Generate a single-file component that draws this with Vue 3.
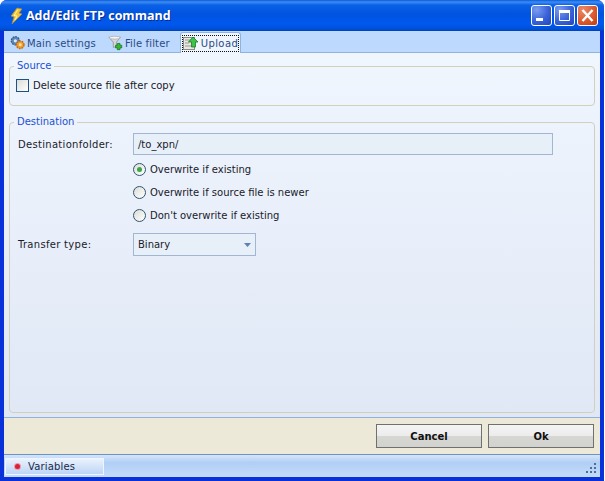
<script setup>
const options = [
  { label: 'Overwrite if existing', checked: true },
  { label: 'Overwrite if source file is newer', checked: false },
  { label: "Don't overwrite if existing", checked: false },
]
</script>

<template>
  <div class="window">
    <div class="titlebar">
      <svg class="app-icon" width="16" height="18" viewBox="0 0 16 18">
        <path d="M9 1 L14 2 L11 6 L14 7 L4 17 L6 10 L3 9 Z" fill="#f2c431" stroke="#9b8c58" stroke-width="0.8"/>
        <path d="M10 2.5 L6 8.5 L9 9 L7 13" fill="none" stroke="#fff6b0" stroke-width="1"/>
      </svg>
      <span class="title">Add/Edit FTP command</span>
      <div class="caption-buttons">
        <div class="cap cap-blue">
          <svg width="19" height="19" viewBox="0 0 19 19"><rect x="4" y="12" width="7" height="3" fill="#fff"/></svg>
        </div>
        <div class="cap cap-blue">
          <svg width="19" height="19" viewBox="0 0 19 19"><path d="M4.5 4.5H14.5V14.5H4.5Z" fill="none" stroke="#fff"/><rect x="4" y="4" width="11" height="3" fill="#fff"/></svg>
        </div>
        <div class="cap cap-red">
          <svg width="19" height="19" viewBox="0 0 19 19"><path d="M4.5 4 L14.5 15 M14.5 4 L4.5 15" stroke="#fff" stroke-width="2.4"/></svg>
        </div>
      </div>
    </div>
    <div class="body">
      <div class="tabs">
        <div class="tab">
          <svg width="16" height="16" viewBox="0 0 18 17">
            <circle cx="6" cy="6" r="4.6" fill="#5a86b8" stroke="#2f5c8e" stroke-width="1.4" stroke-dasharray="2 1"/>
            <circle cx="6" cy="6" r="1.8" fill="#dfe9f5"/>
            <circle cx="11.5" cy="10.5" r="4.2" fill="#f0a030" stroke="#c86c10" stroke-width="1.6" stroke-dasharray="2 1"/>
            <circle cx="11.5" cy="10.5" r="1.6" fill="#ffe2a8"/>
          </svg>
          <span>Main settings</span>
        </div>
        <div class="tab">
          <svg width="16" height="16" viewBox="0 0 18 18">
            <path d="M1 2.5 H14 L9.5 8 V13 L6 14 V8 Z" fill="#d8d8d8" stroke="#8a8a8a" stroke-width="0.8"/>
            <ellipse cx="7.5" cy="3" rx="6" ry="1.6" fill="#f4f4f4" stroke="#9a9a9a" stroke-width="0.6"/>
            <path d="M10.5 9.5H13.5V11.5H15.5V14.5H13.5V16.5H10.5V14.5H8.5V11.5H10.5Z" fill="#35b838" stroke="#1b6d1d" stroke-width="0.8"/>
          </svg>
          <span>File filter</span>
        </div>
        <div class="tab active">
          <div class="focus">
            <svg width="16" height="15" viewBox="0 0 16 15">
              <rect x="0.5" y="1.5" width="11" height="12" fill="#e8e6df" stroke="#8c8c86"/>
              <path d="M2 4H8M2 7H6M2 10H9" stroke="#9a9a94"/>
              <path d="M10 1 L15 6 H12.5 V11 H8.5 V6 H5.5 Z" fill="#3cc44a" stroke="#1a7a26" stroke-width="0.8"/>
            </svg>
            <span>Upload</span>
          </div>
        </div>
      </div>
      <div class="panel">
        <fieldset class="group source">
          <legend>Source</legend>
          <label class="check"><span class="box"></span><span>Delete source file after copy</span></label>
        </fieldset>
        <fieldset class="group dest">
          <legend>Destination</legend>
          <div class="row first">
            <span class="field-label">Destinationfolder:</span>
            <div class="input">/to_xpn/</div>
          </div>
          <div class="radios">
            <div v-for="o in options" :key="o.label" class="radio">
              <span class="circle"><span v-if="o.checked" class="dot"></span></span>
              <span>{{ o.label }}</span>
            </div>
          </div>
          <div class="row type-row">
            <span class="field-label">Transfer type:</span>
            <div class="select">
              <span>Binary</span>
              <svg width="7" height="4" viewBox="0 0 7 4"><path d="M0 0H7L3.5 4Z" fill="#5b82b4"/></svg>
            </div>
          </div>
        </fieldset>
      </div>
      <div class="footer">
        <button class="btn">Cancel</button>
        <button class="btn">Ok</button>
      </div>
      <div class="status">
        <div class="variables">
          <span class="bullet"></span>
          <span>Variables</span>
        </div>
        <svg class="grip" width="11" height="11" viewBox="0 0 11 11" fill="#4d6f96">
          <rect x="8" y="0" width="2" height="2"/>
          <rect x="4" y="4" width="2" height="2"/><rect x="8" y="4" width="2" height="2"/>
          <rect x="0" y="8" width="2" height="2"/><rect x="4" y="8" width="2" height="2"/><rect x="8" y="8" width="2" height="2"/>
        </svg>
      </div>
    </div>
  </div>
</template>

<style>
html, body { margin: 0; background: #fff; }
</style>

<style scoped>
.window {
  width: 604px;
  height: 481px;
  box-sizing: border-box;
  display: flex;
  flex-direction: column;
  font-family: "DejaVu Sans", sans-serif;
  font-size: 10px;
  color: #1a1a2a;
  background: #0831d9;
  border-radius: 7px 7px 0 0;
  overflow: hidden;
}
.titlebar {
  height: 31px;
  flex: none;
  display: flex;
  align-items: center;
  padding: 0 6px 0 8px;
  background: linear-gradient(180deg, #0a5bdc 0, #3f8cf3 2px, #0a62e8 5px, #0053df 14px, #0058ee 24px, #0050d8 29px, #0040b8 31px);
}
.app-icon { margin-right: 2px; }
.title {
  font-family: "Open Sans", sans-serif;
  font-weight: 700;
  font-size: 12.5px;
  color: #fff;
  text-shadow: 1px 1px 0 #0a2d90;
  flex: 1;
}
.caption-buttons { display: flex; gap: 2px; }
.cap {
  width: 19px;
  height: 19px;
  border: 1px solid #fff;
  border-radius: 3px;
  display: flex;
}
.cap svg { display: block; }
.cap-blue { background: radial-gradient(circle at 25% 20%, #7a9cf0, #3a62d8 55%, #1f45c0); }
.cap-red { background: radial-gradient(circle at 25% 20%, #eb8a68, #dc5a30 55%, #c03c12); }
.body {
  flex: 1;
  min-height: 0;
  margin: 0 4px 4px;
  display: flex;
  flex-direction: column;
  background: #bdd9fd;
}
.tabs {
  height: 22px;
  box-sizing: border-box;
  flex: none;
  display: flex;
  align-items: flex-end;
  padding-left: 1px;
  background: #bdd9fd;
  border-bottom: 1px solid #8fb2df;
  color: #2a4a86;
  letter-spacing: 0.15px;
}
.tab {
  display: flex;
  align-items: center;
  gap: 1px;
  height: 21px;
  padding: 3px 5px 0;
  box-sizing: border-box;
  margin-right: 2px;
  white-space: nowrap;
}
.tab.active {
  height: 21px;
  position: relative;
  top: 1px;
  width: 61px;
  padding: 1px 2px 0;
  background: #eff6fe;
  border: 1px solid #8fb2df;
  border-bottom: none;
  border-radius: 3px 3px 0 0;
  margin-left: 3px;
}
.focus {
  display: flex;
  align-items: center;
  gap: 2px;
  height: 15px;
  outline: 1px dotted #111;
  color: #2a4a86;
  letter-spacing: 0.4px;
}
.panel {
  flex: 1;
  min-height: 0;
  box-sizing: border-box;
  padding: 7px 5px 4px;
  display: flex;
  flex-direction: column;
  gap: 10px;
  background: linear-gradient(180deg, #f0f6fe, #e0e8f6);
  border-bottom: 1px solid #8fb2df;
}
.group {
  margin: 0;
  border: 1px solid #d2d0ba;
  border-radius: 4px;
  padding: 0 6px;
  min-width: 0;
}
.group legend {
  margin-left: -2px;
  padding: 0 3px;
  color: #2251d0;
  line-height: 12px;
  font-size: 10px;
}
.source {
  height: 46px;
  box-sizing: border-box;
  flex: none;
}
.check {
  display: flex;
  align-items: center;
  gap: 4px;
  margin-top: 7px;
}
.box {
  width: 11px;
  height: 11px;
  border: 1px solid #1c5180;
  background: linear-gradient(135deg, #dcdcd6, #fff);
  flex: none;
}
.dest {
  flex: 1;
  min-height: 0;
}
.row { display: flex; align-items: center; margin-left: 2px; }
.row.first { margin-top: 5px; }
.field-label { width: 115px; flex: none; letter-spacing: 0.3px; }
.input {
  width: 420px;
  height: 22px;
  box-sizing: border-box;
  padding: 0 4px;
  display: flex;
  align-items: center;
  background: #e7eff9;
  border: 1px solid #a2b6d4;
}
.radios {
  margin: 3px 0 0 117px;
  display: flex;
  flex-direction: column;
}
.radio {
  display: flex;
  align-items: center;
  gap: 4px;
  height: 23px;
}
.circle {
  width: 11px;
  height: 11px;
  border: 1px solid #31546e;
  border-radius: 50%;
  background: linear-gradient(135deg, #dcdcd6, #fff);
  display: flex;
  align-items: center;
  justify-content: center;
  flex: none;
}
.dot {
  width: 5px;
  height: 5px;
  border-radius: 50%;
  background: #3aa84a;
}
.type-row { margin-top: 6px; }
.select {
  width: 123px;
  height: 23px;
  box-sizing: border-box;
  padding: 0 4px 0 4px;
  display: flex;
  align-items: center;
  justify-content: space-between;
  background: #e7eff9;
  border: 1px solid #a2b6d4;
}
.footer {
  height: 37px;
  flex: none;
  box-sizing: border-box;
  display: flex;
  justify-content: flex-end;
  align-items: center;
  gap: 6px;
  padding-right: 6px;
  background: #ece9d8;
  border-bottom: 1px solid #6d93c4;
}
.btn {
  width: 106px;
  height: 24px;
  padding: 0;
  font-family: "DejaVu Sans", sans-serif;
  font-size: 10px;
  font-weight: 700;
  color: #111;
  border: 1px solid #707070;
  border-radius: 0;
  background: linear-gradient(180deg, #f4f4f4 0, #ececec 48%, #d6d6d2 52%, #d2d2ce 100%);
}
.status {
  flex: none;
  height: 22px;
  display: flex;
  align-items: center;
  justify-content: space-between;
  padding: 0 3px 0 1px;
  background: linear-gradient(180deg, #d5e5fa, #b0cff5 35%, #c4dcfa);
}
.variables {
  width: 99px;
  height: 17px;
  box-sizing: border-box;
  border: 1px solid #eef5fe;
  background: linear-gradient(180deg, #eaf2fd, #bcd5f6);
  display: flex;
  align-items: center;
  padding-left: 9px;
  gap: 8px;
  color: #1a2a4a;
  letter-spacing: 0.15px;
}
.bullet {
  width: 5px;
  height: 5px;
  border-radius: 50%;
  background: #d8203a;
  box-shadow: 0 0 0 1px #f09aa6;
}
.grip { align-self: flex-end; margin-bottom: 3px; }
</style>
